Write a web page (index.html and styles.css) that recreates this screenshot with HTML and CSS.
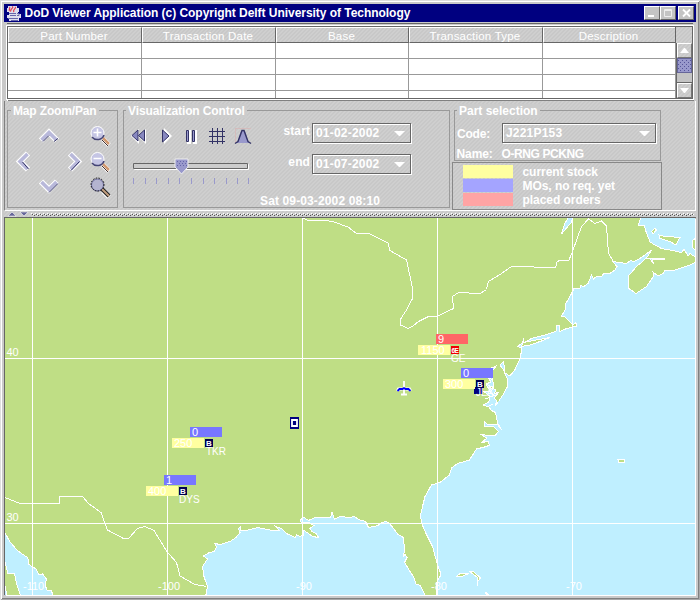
FILE: index.html
```html
<!DOCTYPE html>
<html lang="en">
<head>
<meta charset="utf-8">
<title>DoD Viewer Application</title>
<link rel="stylesheet" href="styles.css">
</head>
<body>
<div class="window">
  <header class="titlebar">
    <svg class="logo" width="16" height="16" viewBox="0 0 16 16"><path d="M2 1h9v2h2v4h-1v2h3v4h-2v3H3v-3H1v-3h2V7H1V3h1z" fill="#dde"/><path d="M6 1.500c3 1-3 3-1 5M9 2c2 1-3 3-1 5M3.500 2c1 1-1 3 0 4" stroke="#e04050" fill="none" stroke-width="1.200"/><path d="M3 8.500h7M4 10.500h6M2 13.500h10M5 15.500h7M11 8.500h2v2h-2" stroke="#6666aa" fill="none"/></svg>
    <h1>DoD Viewer Application (c) Copyright Delft University of Technology</h1>
    <div class="wbuttons">
      <span class="wbtn"><svg width="14" height="12"><path d="M3 9h6" stroke="#fff" stroke-width="2"/></svg></span>
      <span class="wbtn"><svg width="14" height="12"><path d="M3.500 2.500h7v7h-7zM3 3.500h8" stroke="#ededed" fill="none"/></svg></span>
      <span class="wbtn close"><svg width="14" height="12"><path d="M4 2.500l7 7M11 2.500l-7 7" stroke="#fff" stroke-width="1.800"/></svg></span>
    </div>
  </header>
  <section class="table-wrap">
    <div class="grid-table">
      <div class="th">Part Number</div><div class="th">Transaction Date</div><div class="th">Base</div><div class="th">Transaction Type</div><div class="th">Description</div>
      <div class="td"></div><div class="td"></div><div class="td"></div><div class="td"></div><div class="td"></div>
      <div class="td"></div><div class="td"></div><div class="td"></div><div class="td"></div><div class="td"></div>
      <div class="td"></div><div class="td"></div><div class="td"></div><div class="td"></div><div class="td"></div>
      <div class="td"></div><div class="td"></div><div class="td"></div><div class="td"></div><div class="td"></div>
    </div>
    <div class="scroll">
      <div class="corner"></div>
      <div class="sbtn"><svg width="9" height="5"><path d="M0 5h9L5 0H4z" fill="#fff"/></svg></div>
      <div class="thumb"></div>
      <div class="track"></div>
      <div class="sbtn"><svg width="9" height="5"><path d="M0 0h9L5 5H4z" fill="#fff"/></svg></div>
    </div>
  </section>
  <section class="controls">
    <div class="panel zoompan">
      <h2>Map Zoom/Pan</h2>
      <svg width="108" height="84" viewBox="8 120 108 84">
        <g fill="none" stroke-linejoin="miter">
          <g stroke="#fff" stroke-width="6"><path d="M41 140.500l8-8 8 8M28 153.500l-8 8 8 8M70 153.500l8 8-8 8M41 181.500l8 8 8-8"/></g>
          <g stroke="#b8b8da" stroke-width="3.600"><path d="M41.500 140l7.500-7.500 7.500 7.500M27.500 154l-7.500 7.500 7.500 7.500M70.500 154l7.500 7.500-7.500 7.500M41.500 182l7.500 7.500 7.500-7.500"/></g>
          <g stroke="#333366"><path d="M43 141.500l6-6M54 141.500l4-3M22.500 162l6 7M71 170.500l8.500-9M49 192.500l9-9"/></g>
        </g>
        <g>
          <path d="M103 139l6 6M103 165l6 6M103 191l6 6" stroke="#fff" stroke-width="5"/>
          <path d="M103 138l6 6M103 164l6 6" stroke="#d09870" stroke-width="2.500"/>
          <path d="M102 140l6 6M102 166l6 6" stroke="#433"/>
          <path d="M102 189l7 7" stroke="#222" stroke-width="4"/><path d="M102 189l7 7" stroke="#c4a080" stroke-width="2"/>
          <circle cx="97.500" cy="133" r="6.500" fill="#c5c5e4" stroke="#fff"/><circle cx="97.500" cy="159" r="6.500" fill="#c5c5e4" stroke="#fff"/>
          <path d="M92 137a7 7 0 0 0 12-2M92 163a7 7 0 0 0 12-2" stroke="#444477" stroke-width="1.500" fill="none"/>
          <path d="M93.500 132.500h8M97.500 128.500v8M93.500 158.500h8" stroke="#fff" stroke-width="1.600"/>
          <circle cx="97.500" cy="185" r="6" fill="#b4b4d0" stroke="#666699"/>
          <circle cx="97.500" cy="184.500" r="6.500" fill="none" stroke="#111" stroke-dasharray="1.500 1.300"/>
        </g>
      </svg>
    </div>
    <div class="panel vis">
      <h2>Visualization Control</h2>
      <svg class="player" width="130" height="70" viewBox="128 122 130 70">
        <g fill="#fff"><path d="M139 129v15l-8-8zM146 129v15l-8-8zM164 128l8 8-8 8z"/><path d="M187 130h4v14h-4zM193 130h4v14h-4z"/></g>
        <path d="M138 130v11l-6-5.500zM144.500 130v11l-6-5.500zM162.500 130v12l6.500-6z" fill="#8888c0" stroke="#333366"/>
        <path d="M186.500 130.500h2v11h-2zM192.500 130.500h2v11h-2z" fill="#9999cc" stroke="#333366"/>
        <path d="M212.500 128v16M217.500 128v16M222.500 128v16M209 131.500h16M209 136.500h16M209 141.500h16" stroke="#333366"/>
        <path d="M235 128.500h16M235.500 128v15" stroke="#d4bcbc"/>
        <path d="M236 143c4-3 3-13 7-13s3 10 7 13z" fill="#9999cc"/><path d="M235 143.500l3-2 4-11h2l4 11 3 2" fill="none" stroke="#333366" stroke-width="1.400"/>
        <path d="M134.500 164.500h114v5h-114z" fill="none" stroke="#fff"/><path d="M133.500 163.500h114v5h-114z" fill="#ccc" stroke="#666"/>
        <path d="M175 159h13v8l-6.500 7-6.500-7z" fill="#9999cc" stroke="#eee"/><path d="M177 161.500h10M179 163.500h9M177 165.500h10" stroke="#6666aa" stroke-dasharray="1 2"/>
        <path d="M133.500 178v6M145.500 178v6M156.500 178v6M168.500 178v6M179.500 178v6M191.500 178v6M203.500 178v6M214.500 178v6M226.500 178v6M237.500 178v6M248.500 178v6" stroke="#9999cc"/>
      </svg>
      <div class="dates">
        <label>start</label><div class="combo">01-02-2002<svg width="11" height="5"><path d="M0 0h11L6 5H5z" fill="#fff"/></svg></div>
        <label>end</label><div class="combo">01-07-2002<svg width="11" height="5"><path d="M0 0h11L6 5H5z" fill="#fff"/></svg></div>
      </div>
      <div class="now">Sat 09-03-2002 08:10</div>
    </div>
    <div class="right">
      <div class="panel part">
        <h2>Part selection</h2>
        <div class="code"><span>Code:</span><div class="combo">J221P153<svg width="11" height="5"><path d="M0 0h11L6 5H5z" fill="#fff"/></svg></div></div>
        <div class="name"><span>Name:</span><span>O-RNG PCKNG</span></div>
      </div>
      <div class="legend">
        <i class="stock"></i><span>current stock</span>
        <i class="mos"></i><span>MOs, no req. yet</span>
        <i class="orders"></i><span>placed orders</span>
      </div>
    </div>
  </section>
  <div class="splitter"><svg width="24" height="6"><path d="M1 5L5 1 9 5zM13 1l4 4 4-4z" fill="#666699" stroke="#fff" stroke-width=".5"/></svg><span class="grip"></span></div>
  <svg class="map" width="690" height="377" viewBox="5 218 690 377">
    <g class="land" shape-rendering="crispEdges">
      <path d="M0 210L0 527 5 533 10 542 17 550 22 554 27 557 29 561 28 564 33 567 36 569 39 575 42.500 574 46.500 579 45 585 47 590 51.500 590.500 54 600 205 600 207.500 586.500 204 576.500 202.500 566.500 207.500 559 203.500 556 208.500 553 214 551.500 216.500 547.500 215 543.500 220 544.500 230 541.500 236 537.500 240 532.500 238.500 528.500 240.500 526.500 240.500 530.500 248 530 258 527.500 270 530 279 530 276 526.500 281.500 528.500 286.500 533.500 295 537.500 296.500 535 300 536.500 303.500 535 304 530.500 308.500 533.500 312.500 536.500 318.500 537.500 316.500 534 311.500 531 310 528.500 314 525.500 310 523 301.500 522.500 300 520 304 517.500 308.500 520.500 315 517.500 330.500 517.500 332 512.500 334.500 519 340 516.500 350 517.500 354 516.500 360 520 365.500 521.500 368.500 527.500 378 525.500 382 522.500 386 521.500 390 524 398 534.500 403.500 537.500 404.500 550 403.500 556.500 405 554 407 557.500 404.500 562.500 410 571.500 413.500 576.500 416 584 420.500 585.500 427 600 436 600 437 582 440 576.500 440 571.500 437 563 432.500 546.500 426 533.500 421.500 523 420.500 515 422.500 506.500 425 496.500 431.500 485 440 482.500 449.500 475 451.500 468 457.500 463.500 469.500 460 476.500 449 486.500 446.500 489.500 445 488 441 481 443 487 438 480 434 490 436 495 435.500 498.500 431.500 494 427 484 426 484 421 488 425 497 424 501.500 429.500 497.500 423 495.500 412.500 491.500 410.500 489 407 483 405 489.500 401.500 490 396.500 484 391.500 490 391 486 384 491 382 487.500 377 490 373 489 369 496 366 492.500 371 492.500 380 494 386 489 387 496 390 494 394 499 392 494 398 497 401 495 406 498.500 401.500 503.500 394 507.500 386.500 507.500 379 503.500 370 500 365 503.500 361.500 505 373 510 376 515 369.500 519.500 360 521.500 351.500 521.500 348 517.500 346.500 522 343 524 338.500 523 343 531.500 338.500 545 335 556 331.500 556.500 325.500 559 325.500 560 331.500 566.500 328.500 573 327 576.500 326.500 576 322.500 573 325 565 317 561.500 316 565 310 565 305 571.500 293.500 574 288.500 580 288 581 285 583 287 588 283.500 591.500 275 593.500 279 597 276 601.500 276.500 604 273 609 274 615 270 617 266.500 612.500 261.500 626.500 263.500 631 260 633 262 640 258.500 651.500 250 648 256 642 262 636.500 266.500 628 276.500 628 288 636 293.500 646.500 286.500 653.500 276.500 653 272 658 276 663.500 273.500 665 270 672 271 680 268.500 690 265 700 260 690 253.500 688 256 684 249 681.500 252.500 670 250 661.500 248.500 655 245 650 242 646 231.500 644 225 638.500 225 643 210z"/>
      <path d="M0 555L5 562.500 8 574 14.500 573.500 16.500 583 22 600 8 600 5 586 0 583z"/>
      <path d="M521.500 346.500L523 342.500 536.500 340 550 337.500 541.500 341 530 345zM659 235L663 236 680 237.500 676 245 670 241.500 660 238.500zM651.500 231.500L655 228 656.500 230 653 234zM698 236L692 241 692 247 698 253zM618 459.500H624V462.500H619zM456.500 576.500L460 573.500H469L463 576zM469 571L474 572 480.500 578 478 581 477 585.500 478 578zM485 592L489 595 486 594z"/>
      <path class="water" d="M561.500 234L565 223 570 215H573L571.500 222.500 566 228.500zM645 258L665 259 652 260 654 264 650 259z"/>
      <path class="border" d="M303 218L307 220 312 221 324 220 334 222 348 227 356 233 370 234 380 239 388 243 390 250.500 406.500 260 412.500 288 412.500 298.500 406.500 310 400 320 400.500 325 408.500 328.500 413 326 418.500 321.500 428.500 316.500 437.500 316 453.500 308.500 452.500 296.500 458.500 292.500 480 293.500 486.500 289.500 488.500 281.500 501.500 273.500 511.500 266.500 555.500 267.500 557 262 560 260 568.500 261 572.500 251.500 581.500 226.500 588.500 219 595 223.500 601.500 221 606.500 226 608.500 253.500 613.500 261.500M5 497.500L20 503.500H59.500V496.500H82.500L88.500 503.500 101 512.500 107.500 530 123.500 538.500H128.500L137.500 528.500 145 526.500 154 530.500 166.500 551 176.500 562.500 180 576 195 584.500 206.500 586.500"/>
      <path class="border" d="M487 377l6 3M486 384l8 4-4 4 6 5M485 399l8-3M493 404l-6 3"/>
      <path class="border" d="M32.500 218v378M167.500 218v378M302.500 218v378M437.500 218v378M572.500 218v378M5 358.500h691M5 523.500h691"/>
    </g>
    <g class="degrees">
      <text x="6.500" y="356">40</text><text x="6.500" y="521">30</text>
      <text x="23" y="590">-110</text><text x="158" y="590">-100</text><text x="296" y="590">-90</text><text x="431" y="590">-80</text><text x="566" y="590">-70</text>
    </g>
    <g class="marks">
      <rect class="placed" x="436" y="334" width="32" height="10"/><rect class="have" x="418" y="345" width="32" height="10"/>
      <text x="438" y="343">9</text><text x="421" y="354">1150</text>
      <rect x="451" y="346" width="8" height="8" fill="#e00"/><text class="tag narrow" x="451.500" y="352.500">6E</text><text class="place" x="451" y="361.500">GE</text>
      <rect x="474" y="387" width="9" height="7" fill="#000080"/><text class="place" x="476" y="395.500">JLA</text>
      <rect class="mo" x="461" y="368" width="32" height="10"/><rect class="have" x="443" y="379" width="32" height="10"/>
      <text x="463" y="377">0</text><text x="445" y="388">300</text>
      <rect x="476" y="380" width="8" height="8" fill="#000050"/><text class="tag" x="477" y="386.500">B</text>
      <rect class="mo" x="190" y="427" width="32" height="10"/><rect class="have" x="172" y="438" width="32" height="10"/>
      <text x="192" y="436">0</text><text x="174" y="447">250</text>
      <rect x="205" y="439" width="8" height="8" fill="#000050"/><text class="tag" x="206" y="445.500">B</text><text class="place" x="206" y="454.500">TKR</text>
      <rect class="mo" x="164" y="475" width="32" height="10"/><rect class="have" x="146" y="486" width="32" height="10"/>
      <text x="166" y="484">1</text><text x="148" y="495">400</text>
      <rect x="179" y="487" width="8" height="8" fill="#000050"/><text class="tag" x="180" y="493.500">B</text><text class="place" x="179" y="502.500">DYS</text>
      <rect x="290" y="417" width="9" height="12" fill="#000080"/><path d="M292 420h5v6h-5z" fill="#000080" stroke="#fff" stroke-width="1.800"/>
      <path d="M404 381v14M401 394.500h6" stroke="#fff" stroke-width="1.800"/><path d="M397.500 391l1-2h4M410.500 391l-1-2h-4" fill="none" stroke="#fff" stroke-width="3"/><path d="M397.500 391l2-2h3l1.500-1 1.500 1h3l2 2" fill="none" stroke="#00f" stroke-width="1.800"/>
    </g>
  </svg>
</div>
</body>
</html>
```
FILE: styles.css
```css
* { box-sizing: border-box; }
body {
  margin: 0;
  width: 700px;
  height: 600px;
  overflow: hidden;
  font: bold 12px/14px "Liberation Sans", Arial, sans-serif;
  color: #fff;
}
svg { display: block; flex: none; }
.window {
  width: 700px;
  height: 600px;
  display: flex;
  flex-direction: column;
  padding: 4px 4px 0;
  background: #c9c9c9;
  box-shadow: inset 1px 1px #dedede, inset -1px -1px #a8a8a8, inset 2px 2px #fff, inset -2px -2px #808080;
}
.titlebar {
  height: 18px;
  display: flex;
  align-items: center;
  background: #000080;
  padding-left: 2px;
  flex: none;
}
h1, h2 { margin: 0; font-size: 12px; line-height: 14px; }
h1 { margin-left: 2.500px; letter-spacing: -.04px; flex: 1; white-space: nowrap; }
.wbuttons { display: flex; padding-right: 2px; }
.wbtn {
  width: 16px;
  height: 14px;
  background: #c4c4c4;
  border: 1px solid;
  border-color: #fff #666 #666 #fff;
}
.wbtn.close { margin-left: 2px; }
.table-wrap {
  height: 73px;
  margin: 4px 3px 0 3px;
  border: 1px solid #666;
  box-shadow: 0 0 0 1px #fff, 0 -2px #ccc, 0 -3px #666, 1px 2px #808080, 0 3px #fff;
  display: flex;
  background: #fff;
  flex: none;
}
.grid-table {
  display: grid;
  grid-template-columns: 134px 134px 133px 134px 133px;
  grid-template-rows: 16px 16px 16px 16px 7px;
  flex: none;
}
.th {
  font-weight: normal;
  font-size: 11.500px;
  letter-spacing: .2px;
  text-align: center;
  line-height: 16px;
  padding-right: 2px;
  border: 1px solid;
  border-color: #fff #666 #666 #fff;
}
.th, .corner, .controls, .splitter, .sbtn, .combo {
  background-color: #ccc;
  background-image: repeating-linear-gradient(-45deg, #cfcfcf 0 1.414px, #c8c8c8 1.414px 2.828px);
}
.td { border-right: 1px solid #999; border-bottom: 1px solid #999; }
.td:nth-last-child(-n+5) { border-bottom: 0; }
.scroll { flex: 1; display: flex; flex-direction: column; border-left: 1px solid #666; }
.corner { height: 16px; margin-left: -2px; border-left: 1px solid #666; }
.sbtn {
  height: 15px;
  border: 1px solid;
  border-color: #fff #777 #777 #fff;
  display: flex;
  align-items: center;
  justify-content: center;
}
.thumb {
  height: 15px;
  border: 1px solid #666699;
  background:
    conic-gradient(from 0deg at 1px 1px, transparent 75%, #555599 0) 2px 3px / 4px 4px,
    conic-gradient(from 0deg at 1px 1px, transparent 75%, #555599 0) 4px 5px / 4px 4px,
    #9999cc;
}
.track { height: 10px; background: #c4c4c4; border-bottom: 1px solid #666; }
.controls {
  margin-top: 2px;
  height: 110px;
  border-left: 1px solid #808080;
  border-right: 1px solid #fff;
  border-bottom: 1px solid #fff;
  padding: 9px 0 0 2px;
  display: flex;
  flex: none;
}
.panel { border: 1px solid #999; position: relative; height: 98px; flex: none; }
.panel h2 {
  position: absolute;
  top: -7px;
  left: 3px;
  padding: 0 2px;
  background: #ccc;
  white-space: nowrap;
}
.zoompan { width: 111px; margin-right: 5px; }
.zoompan > svg { margin-top: 9px; }
.zoompan h2 { letter-spacing: -.15px; }
.vis {
  width: 327px;
  display: grid;
  grid-template-columns: 132px 155px;
  grid-template-rows: 82px 14px;
}
.vis h2 { left: 2px; letter-spacing: -.12px; }
.player { margin: 11px 0 0 4px; }
.dates {
  display: grid;
  grid-template-columns: 56px 99px;
  row-gap: 11px;
  padding-top: 12px;
  align-content: start;
}
.dates label { text-align: right; padding: 1px 2px 0 0; letter-spacing: .1px; }
.dates .combo { letter-spacing: .2px; }
.combo {
  height: 20px;
  border: 1px solid #666;
  box-shadow: inset 1px 1px #fff, 1px 1px #fff;
  padding: 0 5px 0 3px;
  display: flex;
  align-items: center;
  justify-content: space-between;
}
.now { grid-column: 1 / 3; padding: 1px 0 0 136px; letter-spacing: .13px; white-space: nowrap; }
.right { width: 212px; margin-left: 2px; }
.right .part { width: 207px; height: 51px; margin-left: 2px; }
.part h2 { left: 2px; }
.code { display: flex; padding: 12px 3px 0 2px; }
.code span { width: 45px; padding-top: 4px; letter-spacing: -.2px; }
.code .combo { width: 154px; letter-spacing: .2px; }
.name { display: flex; padding: 4px 0 0 1.500px; height: 15px; letter-spacing: -.4px; }
.name span:first-child { width: 45px; letter-spacing: -.1px; }
.legend {
  width: 210px;
  height: 48px;
  margin-top: 1px;
  border: 1px solid #888;
  padding: 2px 0 0 10px;
  display: grid;
  grid-template-columns: 50px 1fr;
  grid-auto-rows: 14px;
  column-gap: 9.500px;
}
.legend i { height: 13px; }
.legend span { line-height: 14px; letter-spacing: -.05px; }
.stock { background: #ffffa0; }
.mos { background: #a4a4ff; }
.orders { background: #ffa4a4; }
.splitter {
  height: 7px;
  padding-left: 3px;
  border-bottom: 1px solid #666;
  display: flex;
  flex: none;
}
.grip {
  flex: 1;
  margin: 2px 2px 1px 0;
  background:
    conic-gradient(from 0deg at 1px 1px, transparent 75%, #fff 0) 0 0 / 4px 8px,
    conic-gradient(from 0deg at 1px 1px, transparent 75%, #555 0) 1px 1px / 4px 8px,
    conic-gradient(from 0deg at 1px 1px, transparent 75%, #fff 0) 2px 1px / 4px 8px,
    conic-gradient(from 0deg at 1px 1px, transparent 75%, #555 0) 3px 2px / 4px 8px;
}
.map {
  margin-left: 1px;
  background: #bfefff;
  box-shadow: -1px 0 #666, 1px 1px #fff;
  font-family: "Liberation Sans", Arial, sans-serif;
}
.land path { fill: #bfde85; stroke: #fff; stroke-width: 1px; }
.land .water { fill: #bfefff; }
.land .border { fill: none; }
.map text { font-size: 11px; font-weight: normal; fill: #fff; }
.map .place { font-size: 10px; }
.map .tag { font-size: 8px; font-weight: bold; }
.map .narrow { font-size: 6.500px; letter-spacing: -.7px; }
.placed { fill: #ff6666; }
.have { fill: #ffffa0; }
.mo { fill: #7777ff; }
```
